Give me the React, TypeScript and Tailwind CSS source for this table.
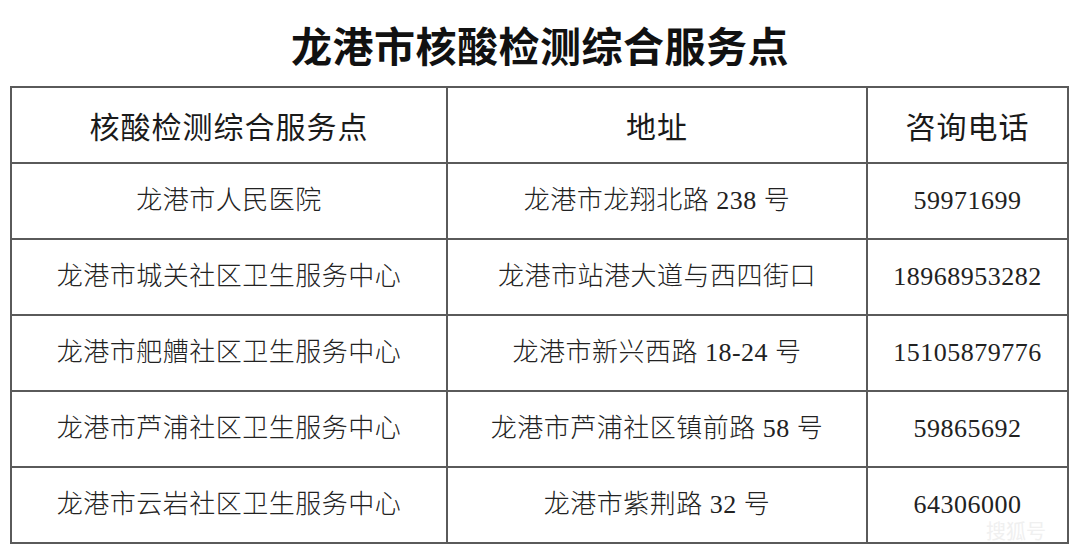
import React from "react";

const rows: [string, string, string][] = [
  ["龙港市人民医院", "龙港市龙翔北路 238 号", "59971699"],
  ["龙港市城关社区卫生服务中心", "龙港市站港大道与西四街口", "18968953282"],
  ["龙港市舥艚社区卫生服务中心", "龙港市新兴西路 18-24 号", "15105879776"],
  ["龙港市芦浦社区卫生服务中心", "龙港市芦浦社区镇前路 58 号", "59865692"],
  ["龙港市云岩社区卫生服务中心", "龙港市紫荆路 32 号", "64306000"],
];

export default function App() {
  return (
    <div className="relative w-[1080px] h-[554px] bg-white overflow-hidden">
      <div className="h-[86px] flex items-center justify-center pt-[4px] text-[41px] font-bold text-[#111] tracking-[0.5px] font-['Noto_Sans_CJK_SC',sans-serif]">
        龙港市核酸检测综合服务点
      </div>
      <div className="ml-[10px] w-[1059px] grid grid-cols-[436px_420px_201px] border-l-2 border-t-2 border-[#5a5a5a]">
        {["核酸检测综合服务点", "地址", "咨询电话"].map((h) => (
          <div
            key={h}
            className="h-[76px] flex items-center justify-center border-r-2 border-b-2 border-[#5a5a5a] text-[30px] text-[#1a1a1a] tracking-[1px] font-['Noto_Sans_CJK_SC',sans-serif]"
          >
            {h}
          </div>
        ))}
        {rows.map((r, i) =>
          r.map((c, j) => (
            <div
              key={i + "-" + j}
              className="h-[76px] flex items-center justify-center border-r-2 border-b-2 border-[#5a5a5a] text-[26px] leading-[30px] font-light text-[#222] tracking-[0.5px] font-['Liberation_Serif','Noto_Sans_CJK_SC',serif]"
            >
              {c}
            </div>
          ))
        )}
      </div>
      <div className="absolute left-[986px] top-[521px] text-[20px] leading-[20px] text-[#f0f0f0] font-['Noto_Sans_CJK_SC',sans-serif]">
        搜狐号
      </div>
    </div>
  );
}
